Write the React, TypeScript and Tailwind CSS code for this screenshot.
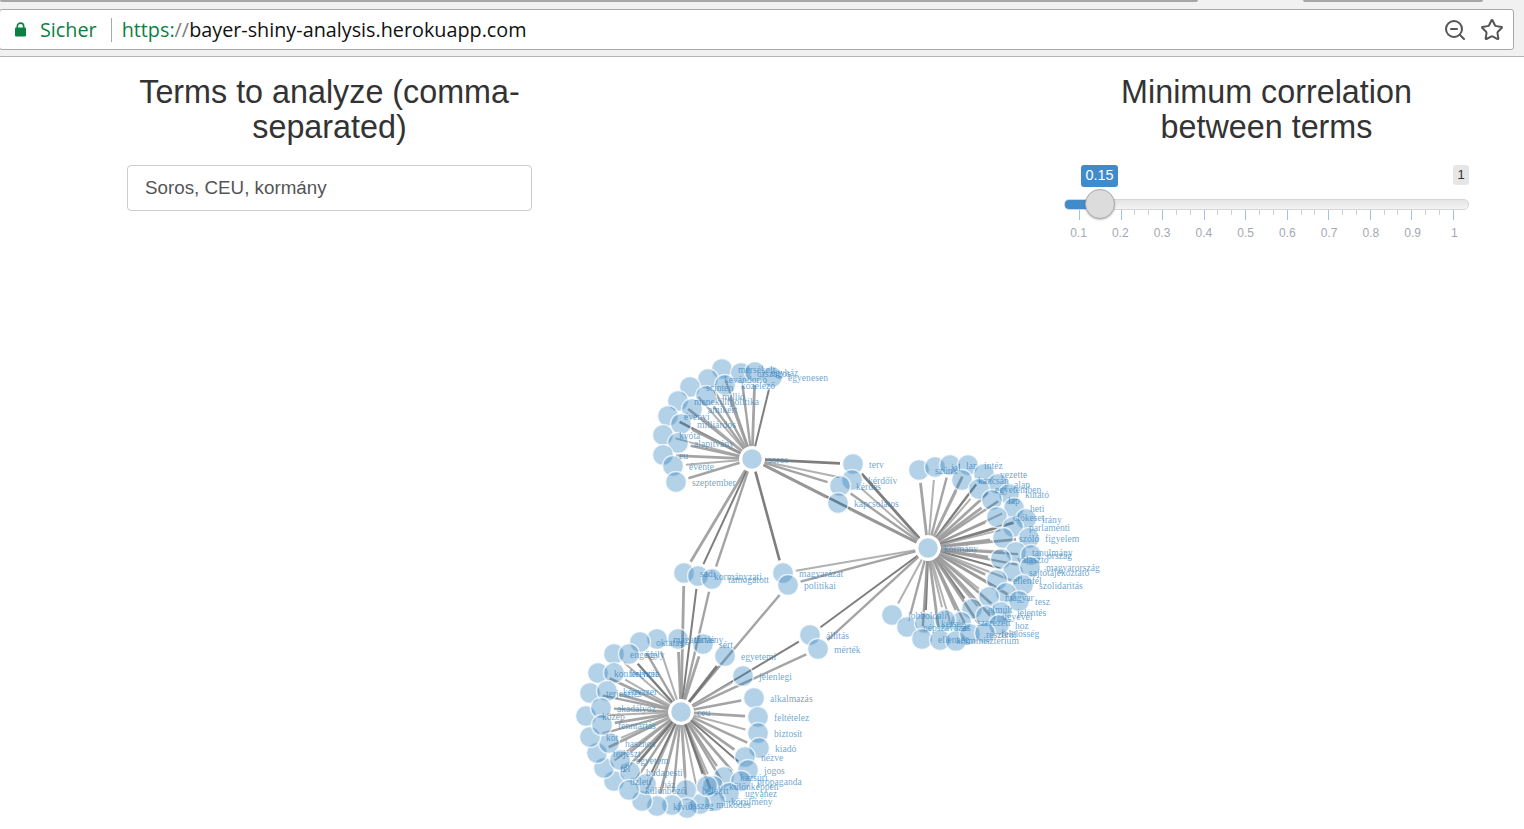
import { ZoomOut, Star } from "lucide-react";

type N = [number, number, string, string];
const H: Record<string, [number, number]> = { S: [752, 459], K: [928, 548], C: [681, 712] };
const hubs: [number, number, string][] = [
  [752, 459, "soros"],
  [928, 548, "kormány"],
  [681, 712, "ceu"],
];
const nodes: N[] = [
  [722, 369, "mérsékelt", "S"], [741, 373, "országos", "S"], [755, 372, "egyház", "S"], [772, 377, "egyenesen", "S"],
  [708, 379, "kevándorló", "S"], [725, 385, "közélező", "S"], [690, 387, "scintén", "S"], [706, 396, "millió", "S"],
  [678, 401, "menekültpolitika", "S"], [692, 409, "amikért", "S"], [668, 416, "évenyi", "S"], [681, 424, "milliárdos", "S"],
  [663, 435, "kvóta", "S"], [678, 443, "alapítvány", "S"], [663, 455, "eu", "S"], [673, 466, "évente", "S"], [676, 482, "szeptember", "S"],
  [853, 464, "terv", "SK"], [852, 480, "kérdőív", "SK"], [840, 486, "kérdés", "SK"], [838, 503, "kapcsolatos", "SK"],
  [783, 573, "magyarázat", "SK"], [788, 585, "politikai", "KC"], [684, 573, "sadi", "SC"], [698, 576, "kormányzati", "SC"], [712, 579, "támogatott", "SC"],
  [919, 470, "szünk", "K"], [935, 467, "jal", "K"], [950, 465, "lar", "K"], [968, 465, "intéz", "K"], [962, 480, "kancsán", "K"],
  [984, 474, "vezette", "K"], [998, 484, "alap", "K"], [979, 489, "egyetemben", "K"], [1009, 494, "kutató", "K"], [992, 500, "lap", "K"],
  [1014, 508, "heti", "K"], [997, 517, "ciókeset", "K"], [1026, 519, "irány", "K"], [1013, 527, "parlamenti", "K"], [1003, 538, "szóló", "K"],
  [1029, 538, "figyelem", "K"], [1016, 552, "tanulmány", "K"], [1031, 555, "ország", "K"], [1001, 559, "választó", "K"], [1013, 572, "sajtótájékoztató", "K"],
  [1030, 567, "magyarország", "K"], [997, 580, "ellenfél", "K"], [1023, 585, "szolidaritás", "K"], [1006, 593, "", "K"], [1019, 601, "tesz", "K"],
  [989, 597, "magyar", "K"], [972, 609, "elmúlt", "K"], [1001, 612, "jelentés", "K"], [986, 616, "ügyével", "K"], [961, 622, "szerezett", "K"],
  [999, 625, "hoz", "K"], [892, 615, "jobboldali", "K"], [907, 627, "népszavazás", "K"], [925, 623, "kétség", "K"], [945, 620, "", "K"],
  [922, 639, "ellenség", "K"], [940, 640, "külminisztérium", "K"], [956, 641, "", "K"], [970, 634, "részéről", "K"], [985, 633, "felelősség", "K"],
  [810, 635, "állítás", "KC"], [818, 649, "mérték", "KC"],
  [678, 639, "törvény", "C"], [657, 639, "magatartás", "C"], [640, 642, "oktatás", "C"], [703, 644, "sért", "C"],
  [614, 654, "engedély", "C"], [629, 654, "ügy", "C"], [598, 673, "konferencia", "C"], [614, 673, "helyzet", "C"], [590, 693, "terjesztés", "C"],
  [607, 691, "kényszer", "C"], [586, 716, "közép", "C"], [601, 708, "akadályoz", "C"],
  [725, 656, "egyetemi", "C"], [743, 676, "jelenlegi", "C"], [754, 698, "alkalmazás", "C"], [758, 717, "feltételez", "C"], [758, 733, "biztosít", "C"],
  [759, 748, "kiadó", "C"], [745, 757, "nézve", "C"], [748, 770, "jogos", "C"], [724, 777, "kazsúri", "C"], [741, 781, "propaganda", "C"],
  [713, 786, "különképpen", "C"], [729, 793, "ugyanez", "C"], [715, 801, "körülmény", "C"], [700, 804, "működés", "C"], [707, 786, "", "C"],
  [686, 790, "belekft", "C"], [687, 808, "", "C"], [672, 805, "összeg", "C"], [657, 806, "kívül", "C"], [642, 801, "", "C"],
  [614, 781, "üzleti", "C"], [630, 772, "budapesti", "C"], [604, 768, "fél", "C"], [620, 760, "egyetem", "C"],
  [597, 753, "terjeszt", "C"], [609, 743, "hasznos", "C"], [590, 737, "köt", "C"], [602, 725, "fenntartás", "C"], [646, 784, "ház", "C"], [629, 790, "különböző", "C"],
];

function Link({ a, b, i, dark }: { a: [number, number]; b: [number, number]; i: number; dark?: boolean }) {
  const dx = b[0] - a[0];
  const dy = b[1] - a[1];
  const d = Math.hypot(dx, dy);
  const t = 13 / d;
  const shade = dark || i % 7 === 3 ? "#707070" : i % 3 === 0 ? "#a8a8a8" : "#9a9a9a";
  return (
    <line
      x1={a[0] + dx * t}
      y1={a[1] + dy * t}
      x2={b[0] - dx * t}
      y2={b[1] - dy * t}
      stroke={shade}
      strokeOpacity={0.9}
      strokeWidth={dark ? 2.6 : 2 + (i % 3) * 0.4}
    />
  );
}

function Graph() {
  return (
    <svg viewBox="0 260 1524 569" className="block w-[1524px] h-[569px]">
      <Link a={H.S} b={H.K} i={3} dark />
      {nodes.map((n, i) =>
        n[3].split("").map((h) => (
          <Link key={`${i}${h}`} a={H[h]} b={[n[0], n[1]]} i={i} dark={h === "S" && n[2] === "magyarázat"} />
        ))
      )}
      {nodes.map((n, i) => (
        <circle key={i} cx={n[0]} cy={n[1]} r={10.5} fill="#3182bd" fillOpacity={0.37} stroke="#fff" strokeOpacity={0.7} strokeWidth={1.5} />
      ))}
      {hubs.map((n) => (
        <circle key={n[2]} cx={n[0]} cy={n[1]} r={10.5} fill="#3182bd" fillOpacity={0.37} stroke="#fff" strokeWidth={1.5} />
      ))}
      <g fontFamily="'Liberation Serif', serif" fontSize={9.6} fill="#3182bd" fillOpacity={0.72}>
        {nodes.map((n, i) => (
          <text key={i} x={n[0] + 16} y={n[1] + 3.5}>
            {n[2]}
          </text>
        ))}
        {hubs.map((n) => (
          <text key={n[2]} x={n[0] + 16} y={n[1] + 3.5}>
            {n[2]}
          </text>
        ))}
      </g>
    </svg>
  );
}

const majors = ["0.1", "0.2", "0.3", "0.4", "0.5", "0.6", "0.7", "0.8", "0.9", "1"];

function Slider() {
  const ticks = Array.from({ length: 28 }, (_, i) => i);
  return (
    <div className="relative w-[405px] mt-[20px]">
      <div className="flex justify-between items-start pl-[17px] h-[24px] text-[14.5px] leading-[20px]">
        <span className="bg-[#428bca] text-white rounded-[3px] w-[37px] h-[22px] text-center">0.15</span>
        <span className="bg-[#e6e6e6] text-[#333] rounded-[3px] w-[16px] h-[20px] text-center text-[13px]">1</span>
      </div>
      <div className="mt-[10px] h-[11px] rounded-[5px] bg-gradient-to-b from-[#e4e4e4] to-[#f4f4f4] border border-[#d6d6d6] overflow-hidden">
        <div className="w-[36px] h-full bg-[#428bca]" />
      </div>
      <div className="absolute left-[21px] top-[24px] w-[30px] h-[30px] rounded-full bg-[#dcdcdc] border border-[#ababab] shadow-[0_1px_2px_rgba(0,0,0,0.25)]" />
      <div className="flex justify-between items-start px-[15px] h-[10px]">
        {ticks.map((i) => (
          <div key={i} className={i % 3 === 0 ? "w-px h-[10px] bg-[#9fc3e4]" : "w-px h-[5px] bg-[#cfcfcf]"} />
        ))}
      </div>
      <div className="flex justify-between px-[14px] mt-[6px] text-[12px] leading-[14px] text-[#a3a9b3]">
        {majors.map((m) => (
          <div key={m} className="w-px flex justify-center">
            <span>{m}</span>
          </div>
        ))}
      </div>
    </div>
  );
}

function Tabs({ w }: { w: number }) {
  return <div style={{ width: w }} className="h-[2px] bg-[#a6a6a6] rounded-b-[2px]" />;
}

export default function App() {
  return (
    <div className="w-[1524px] h-[829px] overflow-hidden bg-white font-['Liberation_Sans',sans-serif]">
      <div className="h-[57px] bg-[#f1f1f1] border-b border-[#b5b5b5] flex flex-col">
        <div className="h-[9px] flex justify-between pr-[41px]">
          <Tabs w={1198} />
          <Tabs w={180} />
        </div>
        <div className="w-[1515px] h-[41px] -ml-px bg-white border border-[#a9a9a9] rounded-[3px] flex items-center pl-[15px] pr-[9px] font-['Open_Sans',sans-serif] text-[19.8px]">
          <svg width="11" height="15" viewBox="0 0 11 15" className="shrink-0">
            <path d="M2.3 6V4.3a3.2 3.2 0 0 1 6.4 0V6" fill="none" stroke="#0b8043" strokeWidth="1.6" />
            <rect x="0" y="5.6" width="11" height="9" rx="1" fill="#0b8043" />
          </svg>
          <span className="ml-[14px] text-[#0b8043]">Sicher</span>
          <div className="ml-[14px] w-px h-[24px] bg-[#a9a9a9]" />
          <span className="ml-[10px] whitespace-nowrap">
            <span className="text-[#0b8043]">https:</span>
            <span className="text-[#7b7b7b]">//</span>
            <span className="text-[#111]">bayer-shiny-analysis.herokuapp.com</span>
          </span>
          <div className="ml-auto flex items-center gap-[13px] text-[#555]">
            <ZoomOut size={24} strokeWidth={2} />
            <Star size={24} strokeWidth={2} />
          </div>
        </div>
      </div>
      <div className="flex justify-between pl-[127px] pr-[55px] h-[203px] text-[#333]">
        <div className="w-[405px]">
          <h2 className="mt-[18px] text-[32.3px] leading-[35px] text-center">Terms to analyze (comma-separated)</h2>
          <div className="mt-[20px] h-[46px] rounded-[4px] border border-[#ccc] pl-[17px] flex items-center text-[18.8px] text-[#555]">
            Soros, CEU, kormány
          </div>
        </div>
        <div className="w-[405px]">
          <h2 className="mt-[18px] text-[32.3px] leading-[35px] text-center px-[30px]">Minimum correlation between terms</h2>
          <Slider />
        </div>
      </div>
      <Graph />
    </div>
  );
}
